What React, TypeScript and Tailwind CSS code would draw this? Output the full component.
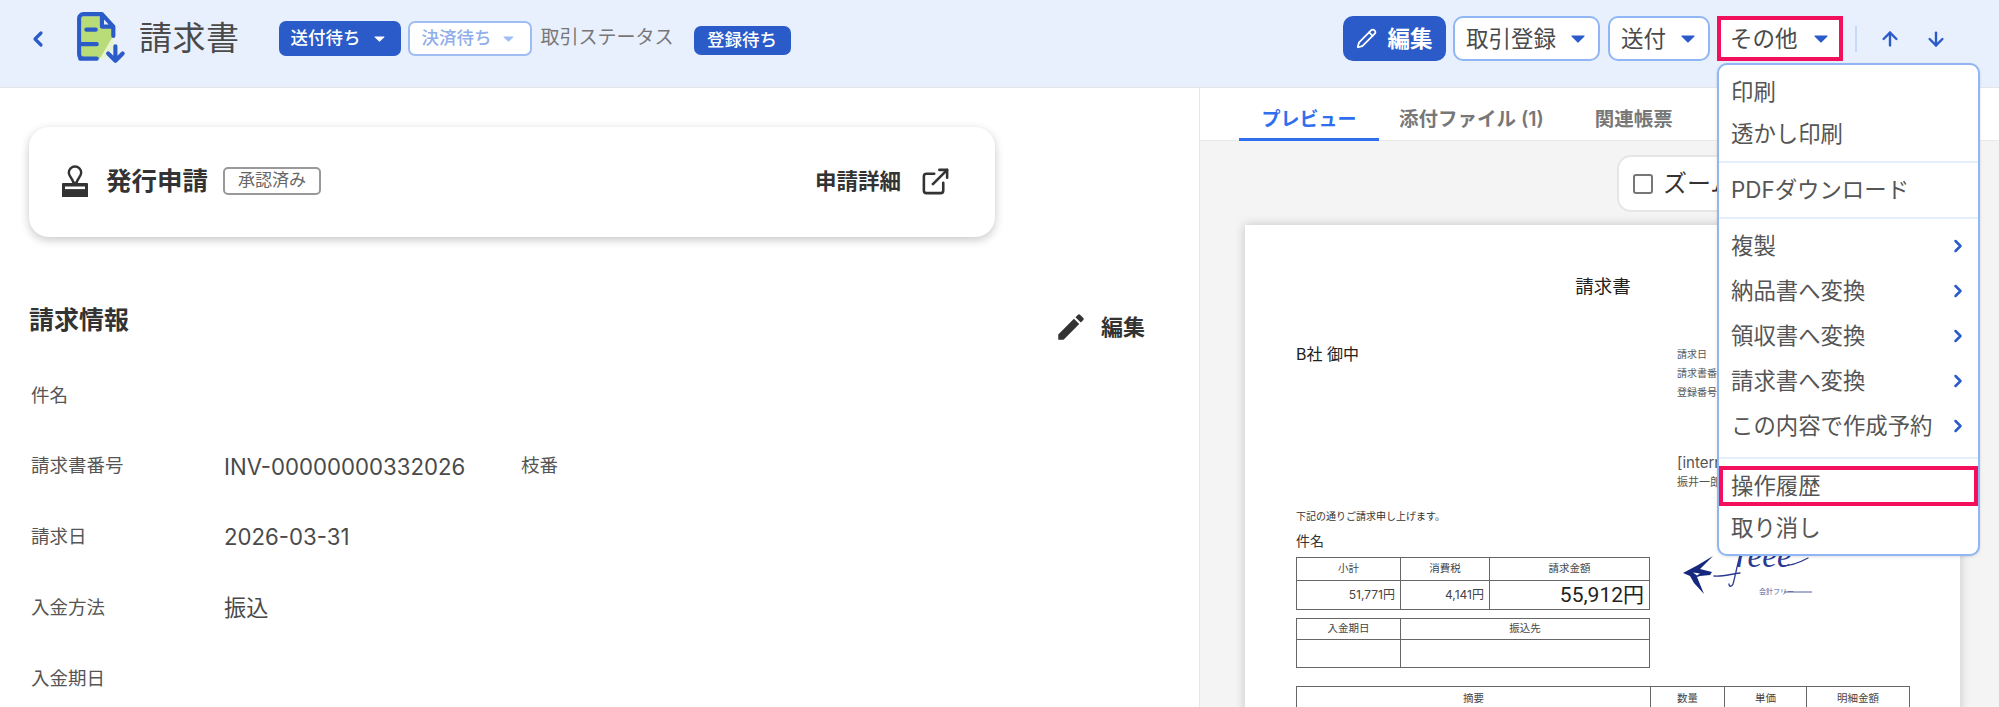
import React from "react";
import { ArrowUp, ArrowDown, ChevronLeft, ChevronRight, ExternalLink, Pencil } from "lucide-react";

const Caret = ({ className, small }: { className: string; small?: boolean }) => (
  <svg width={small ? 11 : 14} height={small ? 6 : 8} viewBox="0 0 14 8" className={className}>
    <path d="M1 0.5h12a.6.6 0 0 1 .45 1L7.4 7.4a.6.6 0 0 1-.85 0L.55 1.5A.6.6 0 0 1 1 .5z" fill="currentColor" />
  </svg>
);

const DocIcon = () => (
  <svg width="58" height="54" viewBox="16 10 56 52" className="shrink-0">
    <path d="M22 14h20v10h11v9L40 55H22z" fill="#b9dc78" />
    <path d="M53 33v12l-8 10h-5z" fill="#e6f3cc" />
    <path d="M36 55H24a4 4 0 0 1-4-4V16a4 4 0 0 1 4-4h18l11 12v9M42 12v12h11M27 27h9M21 41h16M21 55h16" fill="none" stroke="#2a5bc8" strokeWidth="4" strokeLinecap="round" strokeLinejoin="round" />
    <path d="M55 43v14M48 50l7 7 7-7" fill="none" stroke="#2a5bc8" strokeWidth="4" strokeLinecap="round" strokeLinejoin="round" />
  </svg>
);

const StampIcon = () => (
  <svg width="28" height="32" viewBox="0 0 28 32" className="shrink-0">
    <path d="M14 1.5a6.2 6.2 0 0 1 6.2 6.2c0 3.4-3.6 5.6-4.6 10h-3.2c-1-4.400-4.600-6.600-4.600-10A6.200 6.200 0 0 1 14 1.500z" fill="none" stroke="#333" strokeWidth="2.400" />
    <path d="M2 18h24a1 1 0 0 1 1 1v13H1V19a1 1 0 0 1 1-1z" fill="#333" />
    <rect x="4" y="21.500" width="20" height="2.600" fill="#fff" />
  </svg>
);

const EditGlyph = () => (
  <svg width="34" height="34" viewBox="0 0 24 24" className="shrink-0">
    <path fill="#333" d="M3 17.250V21h3.750L17.810 9.940l-3.750-3.750L3 17.250zM20.710 7.040a1 1 0 0 0 0-1.410l-2.340-2.340a1 1 0 0 0-1.410 0l-1.830 1.830 3.750 3.750 1.830-1.830z" />
  </svg>
);

const FreeeLogo = () => (
  <svg width="180" height="70" viewBox="0 0 180 70" className="shrink-0">
    <path d="M23 32l15-8 15-9-13 13 12 3-2 3-10 1-3 1 7 17-10-11-4-7z" fill="#16287e" />
    <path d="M33 31.500l7 1-3 2z" fill="#fff" />
    <path d="M54 35c8 1 17-2 26-3M80 15c-3 9-5 22-7 28-1 3-4 3-4 0M121 25c10 0 18-3 27-8" fill="none" stroke="#2a3a90" strokeWidth="1.300" strokeLinecap="round" />
    <text x="76" y="26" fontFamily="'Liberation Serif', serif" fontStyle="italic" fontSize="33" fill="#2a3a90">reee</text>
    <text x="99" y="53" fontFamily="'Noto Sans CJK JP', sans-serif" fontSize="7" fill="#5560a0">会計フリー</text>
    <path d="M124 51h28" stroke="#5560a0" strokeWidth="1" />
  </svg>
);

const TopBtn = ({ label, width }: { label: string; width: string }) => (
  <button className={`${width} h-[45px] rounded-[10px] border-2 border-[#90b6f6] bg-white pl-[11px] pr-[13px] flex items-center justify-between text-[22.500px] text-[#4a4a4a]`}>
    <span>{label}</span>
    <Caret className="text-[#2a5bc8]" />
  </button>
);

const Row = ({ label, value, extra }: { label: string; value?: string; extra?: string }) => (
  <div className="h-[70.800px] flex items-center pl-[31px]">
    <span className="w-[193px] text-[18.500px] text-[#555]">{label}</span>
    {value && <span className="w-[297px] text-[22.200px] text-[#4a4a4a]">{value}</span>}
    {extra && <span className="text-[18.500px] text-[#555]">{extra}</span>}
  </div>
);

const MenuItem = ({ label, chev, h = "h-[45px]" }: { label: string; chev?: boolean; h?: string }) => (
  <div className={`${h} flex items-center justify-between pl-[12px] pr-[10px] text-[22.400px] text-[#555]`}>
    <span>{label}</span>
    {chev && <ChevronRight size={20} strokeWidth={3} className="text-[#2a5bc8]" />}
  </div>
);

const Td = ({ children, cls }: { children?: React.ReactNode; cls: string }) => (
  <td className={`border border-[#666] p-0 ${cls}`}>{children}</td>
);

export default function App() {
  return (
    <div className="relative w-[1999px] h-[707px] overflow-hidden bg-white font-['Inter','Noto_Sans_CJK_JP',sans-serif] text-[#333]">
      <header className="h-[88px] bg-[#e9f0fd] border-b border-[#e2e5ea] pb-[10px] flex items-center">
        <ChevronLeft size={24} strokeWidth={3.200} className="ml-[26px] mr-[25px] text-[#2a5bc8]" />
        <DocIcon />
        <h1 className="ml-[6px] text-[33px] leading-none font-normal text-[#4a4a4a] tracking-[0.500px]">請求書</h1>
        <button className="ml-[39px] w-[122px] h-[35px] rounded-[7px] bg-[#2a5bc8] text-white text-[17.500px] font-medium pl-[12px] pr-[16px] flex items-center justify-between">
          <span>送付待ち</span><Caret small className="text-white" />
        </button>
        <button className="ml-[7px] w-[124px] h-[35px] rounded-[7px] border-2 border-[#9fbdf3] bg-white text-[#8faeea] text-[17.500px] font-medium pl-[12px] pr-[16px] flex items-center justify-between">
          <span>決済待ち</span><Caret small className="text-[#9fbdf3]" />
        </button>
        <span className="ml-[9px] text-[19px] text-[#777]">取引ステータス</span>
        <span className="ml-[20px] mt-[3px] w-[97px] h-[29px] rounded-[7px] bg-[#2a5bc8] text-white text-[17.500px] font-medium flex items-center justify-center">登録待ち</span>
        <div className="ml-auto flex items-center">
          <button className="w-[103px] h-[45px] rounded-[10px] bg-[#2a5bc8] text-white text-[22.500px] font-semibold flex items-center justify-center gap-[10px]">
            <Pencil size={21} strokeWidth={2} /><span>編集</span>
          </button>
          <div className="ml-[7px]"><TopBtn label="取引登録" width="w-[147px]" /></div>
          <div className="ml-[8px]"><TopBtn label="送付" width="w-[102px]" /></div>
          <div className="ml-[7px] w-[126px] h-[45px] border-[4px] border-[#f2105c] bg-white pl-[9px] pr-[11px] flex items-center justify-between text-[22.500px] text-[#4a4a4a]">
            <span>その他</span><Caret className="text-[#2a5bc8]" />
          </div>
          <div className="ml-[12px] w-[2px] h-[26px] bg-[#c9daf6]" />
          <ArrowUp size={22} strokeWidth={2.600} className="ml-[22px] text-[#2a5bc8]" />
          <ArrowDown size={22} strokeWidth={2.600} className="ml-[24px] mr-[52px] text-[#2a5bc8]" />
        </div>
      </header>

      <div className="flex h-[619px]">
        <section className="w-[1200px] shrink-0 border-r border-[#e6e6e6] bg-white">
          <div className="ml-[29px] mt-[39px] w-[966px] h-[110px] rounded-[20px] bg-white shadow-[0_3px_10px_rgba(0,0,0,0.22)] flex items-center pl-[32px] pr-[44px] pb-[2px]">
            <StampIcon />
            <span className="ml-[17px] text-[25.500px] font-semibold text-[#333]">発行申請</span>
            <span className="ml-[15px] w-[98px] h-[28px] rounded-[5px] border-2 border-[#999] text-[17px] text-[#666] flex items-center justify-center">承認済み</span>
            <span className="ml-auto text-[21.500px] font-semibold text-[#333]">申請詳細</span>
            <ExternalLink size={31} strokeWidth={2} className="ml-[19px] text-[#333]" />
          </div>
          <div className="mt-[60px] pl-[29px] pr-[54px] h-[63px] flex items-start justify-between">
            <h2 className="text-[25px] leading-[46px] font-semibold text-[#333]">請求情報</h2>
            <div className="flex items-center mt-[13px] gap-[13px]">
              <EditGlyph />
              <span className="text-[22px] font-semibold text-[#333]">編集</span>
            </div>
          </div>
          <div>
            <Row label="件名" />
            <Row label="請求書番号" value="INV-00000000332026" extra="枝番" />
            <Row label="請求日" value="2026-03-31" />
            <Row label="入金方法" value="振込" />
            <Row label="入金期日" />
          </div>
        </section>

        <section className="flex-1 bg-[#f5f4f5] min-w-0">
          <nav className="h-[53px] bg-white border-b border-[#e8e8e8] flex items-stretch pl-[39px]">
            <div className="w-[140px] h-[53px] border-b-[3px] border-[#2f6fed] pt-[15px] text-[19px] font-semibold text-[#2f6fed] flex items-center justify-center">プレビュー</div>
            <div className="ml-[20px] pt-[15px] flex items-center text-[19.500px] font-semibold text-[#777] pb-[3px]">添付ファイル (1)</div>
            <div className="ml-[51px] pt-[15px] flex items-center text-[19.500px] font-semibold text-[#777] pb-[3px]">関連帳票</div>
          </nav>
          <div className="ml-[417px] mt-[14px] w-[170px] h-[57px] rounded-[14px] border-2 border-[#e6e6e6] bg-white flex items-center pl-[14px]">
            <span className="w-[20px] h-[20px] rounded-[3px] border-2 border-[#777] bg-white" />
            <span className="ml-[10px] text-[24px] text-[#333]">ズーム</span>
          </div>
          <article className="ml-[45px] mt-[13px] w-[715px] h-[490px] bg-white shadow-[0_0_10px_rgba(0,0,0,0.2)] pl-[51px] pt-[49px] text-[#333]">
            <h3 className="w-[614px] text-center text-[18.500px] leading-[24px] font-normal text-[#222]">請求書</h3>
            <div className="mt-[47px] flex items-start">
              <div className="w-[381px] -mt-[2px] text-[16px] leading-[22px] text-[#222]">B社 御中</div>
              <div className="text-[10px] text-[#555]">
                <div className="leading-[19px]">請求日</div>
                <div className="leading-[19px]">請求書番号</div>
                <div className="leading-[19px]">登録番号</div>
                <div className="mt-[51px] text-[15px] leading-[20px]">[internal]</div>
                <div className="leading-[18px] text-[11px]">振井一郎</div>
              </div>
            </div>
            <p className="mt-[17px] text-[10px] leading-[16px] text-[#333]">下記の通りご請求申し上げます。</p>
            <p className="mt-[7px] text-[14px] leading-[20px] text-[#333]">件名</p>
            <div className="mt-[6px] flex items-start">
              <div className="w-[354px] shrink-0">
                <table className="w-[354px] table-fixed border-collapse text-[10.500px] text-[#444]">
                  <colgroup><col className="w-[104px]" /><col className="w-[89px]" /><col /></colgroup>
                  <tbody>
                    <tr className="h-[23px] text-center"><Td cls="">小計</Td><Td cls="">消費税</Td><Td cls="">請求金額</Td></tr>
                    <tr className="h-[29px] text-right">
                      <Td cls="pr-[5px] text-[12px]">51,771円</Td>
                      <Td cls="pr-[5px] text-[12px]">4,141円</Td>
                      <Td cls="pr-[5px] text-[21px] leading-none font-normal text-[#222] font-['Roboto','Noto_Sans_CJK_JP',sans-serif]">55,912円</Td>
                    </tr>
                  </tbody>
                </table>
                <table className="mt-[8px] w-[354px] table-fixed border-collapse text-[10.500px] text-[#444]">
                  <colgroup><col className="w-[104px]" /><col /></colgroup>
                  <tbody>
                    <tr className="h-[21px] text-center"><Td cls="">入金期日</Td><Td cls="">振込先</Td></tr>
                    <tr className="h-[28px]"><Td cls="" /><Td cls="" /></tr>
                  </tbody>
                </table>
              </div>
              <div className="-mt-[16px] ml-[10px]"><FreeeLogo /></div>
            </div>
          </article>
        </section>
      </div>

      <div className="absolute left-[1296px] top-[686px] w-[614px]">
        <table className="w-[614px] table-fixed border-collapse text-[10.500px] text-[#444]">
          <colgroup><col className="w-[354px]" /><col className="w-[74px]" /><col className="w-[82px]" /><col /></colgroup>
          <tbody>
            <tr className="h-[24px] text-center"><Td cls="">摘要</Td><Td cls="">数量</Td><Td cls="">単価</Td><Td cls="">明細金額</Td></tr>
          </tbody>
        </table>
      </div>

      <div className="absolute left-[1717px] top-[63px] w-[263px] h-[493px] rounded-[10px] border-2 border-[#90b6f6] bg-white shadow-[0_1px_3px_rgba(0,0,0,0.12)]">
        <div className="pt-[6px]">
          <MenuItem label="印刷" h="h-[42px]" />
          <MenuItem label="透かし印刷" h="h-[42px]" />
        </div>
        <div className="mt-[6px] h-[2px] bg-[#e4edfb]" />
        <div className="mt-[7px]"><MenuItem label="PDFダウンロード" h="h-[40px]" /></div>
        <div className="mt-[7px] h-[2px] bg-[#e4edfb]" />
        <div className="mt-[4px]">
          <MenuItem label="複製" chev />
          <MenuItem label="納品書へ変換" chev />
          <MenuItem label="領収書へ変換" chev />
          <MenuItem label="請求書へ変換" chev />
          <MenuItem label="この内容で作成予約" chev />
        </div>
        <div className="mt-[9px] h-[2px] bg-[#e4edfb]" />
        <div className="mt-[7px] h-[40px] border-[4px] border-[#f2105c] flex items-center pl-[8px] text-[22.400px] text-[#555]">操作履歴</div>
        <MenuItem label="取り消し" h="h-[44px]" />
      </div>
    </div>
  );
}
